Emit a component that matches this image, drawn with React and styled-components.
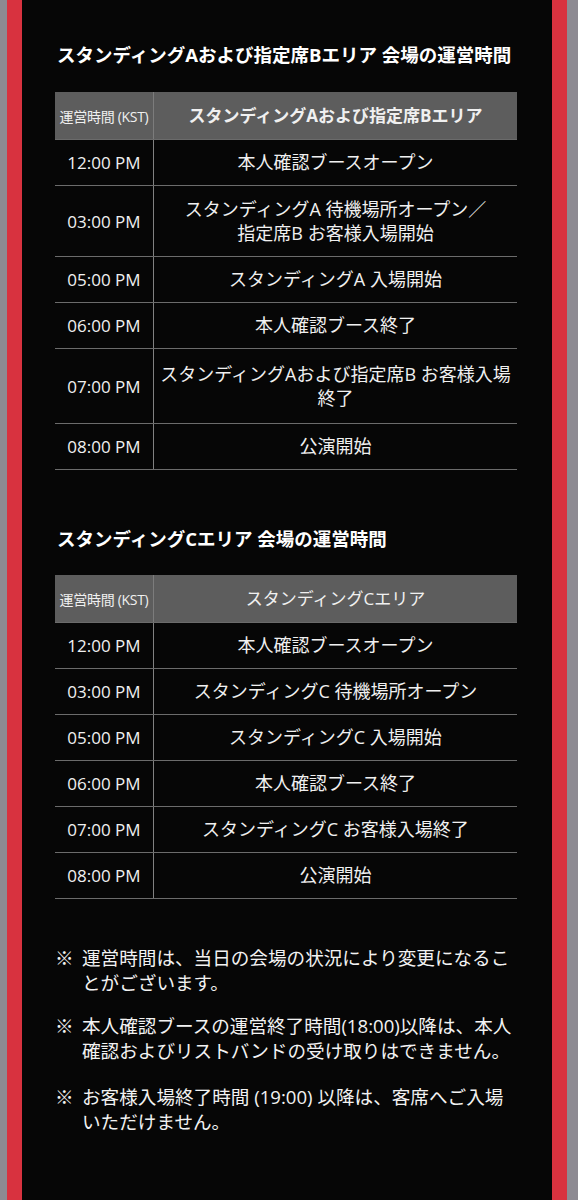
import React from "react";
import styled, { createGlobalStyle } from "styled-components";

const GlobalStyle = createGlobalStyle`
  html, body {
    margin: 0;
    padding: 0;
    background: #050505;
  }
  body {
    font-family: "Open Sans", "Noto Sans CJK JP", sans-serif;
    color: #f2f2f2;
  }
`;

const Frame = styled.div`
  display: flex;
  flex-direction: row;
  width: 578px;
  height: 1200px;
  background: #8d8a92;
`;

const Edge = styled.div`
  width: ${(p) => p.w}px;
  flex-shrink: 0;
  background: ${(p) => (p.red ? "#d8323f" : "#8d8a92")};
`;

const Main = styled.div`
  display: flex;
  flex-direction: column;
  flex: 1;
  background: #060606;
  padding: 42px 35px 0 33px;
`;

const Title = styled.h2`
  margin: ${(p) => p.mt || 0}px 0 0 2px;
  font-size: 18.5px;
  line-height: 26px;
  font-weight: 700;
  color: #ffffff;
  white-space: nowrap;
`;

const Table = styled.div`
  display: flex;
  flex-direction: column;
  margin-top: ${(p) => p.mt || 24}px;
`;

const Row = styled.div`
  display: grid;
  grid-template-columns: 99px 1fr;
  border-bottom: 1px solid #6b6b6b;
  background: ${(p) => (p.head ? "#5d5d5d" : "transparent")};
`;

const TimeCell = styled.div`
  display: flex;
  align-items: center;
  justify-content: center;
  border-right: 1px solid ${(p) => (p.head ? "#7c7c7c" : "#808080")};
  font-size: ${(p) => (p.head ? 14 : 17)}px;
  letter-spacing: ${(p) => (p.head ? "-0.3px" : "0")};
  color: #f0f0f0;
  white-space: nowrap;
`;

const TextCell = styled.div`
  display: flex;
  flex-direction: column;
  align-items: center;
  justify-content: center;
  text-align: center;
  padding: ${(p) => p.pad}px 0;
  font-size: ${(p) => (p.head ? 17 : 18)}px;
  line-height: ${(p) => (p.multi ? 24 : 23)}px;
  font-weight: ${(p) => (p.bold ? 700 : 400)};
  color: #f0f0f0;
  white-space: nowrap;
`;

const Notes = styled.ul`
  list-style: none;
  margin: 46px 0 0 0;
  padding: 0;
  display: flex;
  flex-direction: column;
`;

const Note = styled.li`
  display: flex;
  flex-direction: row;
  margin-top: ${(p) => p.mt}px;
  font-size: 18.6px;
  line-height: 25px;
  color: #f2f2f2;
  white-space: nowrap;
`;

const Mark = styled.span`
  width: 27px;
  flex-shrink: 0;
`;

const scheduleA = [
  ["12:00 PM", ["本人確認ブースオープン"]],
  ["03:00 PM", ["スタンディングA 待機場所オープン／", "指定席B お客様入場開始"]],
  ["05:00 PM", ["スタンディングA 入場開始"]],
  ["06:00 PM", ["本人確認ブース終了"]],
  ["07:00 PM", ["スタンディングAおよび指定席B お客様入場", "終了"], 13],
  ["08:00 PM", ["公演開始"]],
];

const scheduleC = [
  ["12:00 PM", ["本人確認ブースオープン"]],
  ["03:00 PM", ["スタンディングC 待機場所オープン"]],
  ["05:00 PM", ["スタンディングC 入場開始"]],
  ["06:00 PM", ["本人確認ブース終了"]],
  ["07:00 PM", ["スタンディングC お客様入場終了"]],
  ["08:00 PM", ["公演開始"]],
];

const notes = [
  [0, ["運営時間は、当日の会場の状況により変更になるこ", "とがございます。"]],
  [18, ["本人確認ブースの運営終了時間(18:00)以降は、本人", "確認およびリストバンドの受け取りはできません。"]],
  [21, ["お客様入場終了時間 (19:00) 以降は、客席へご入場", "いただけません。"]],
];

const ScheduleTable = ({ area, rows, bold, mt }) => (
  <Table mt={mt}>
    <Row head>
      <TimeCell head>運営時間 (KST)</TimeCell>
      <TextCell head bold={bold} pad={12}>
        {area}
      </TextCell>
    </Row>
    {rows.map(([time, lines, pad]) => (
      <Row key={time}>
        <TimeCell>{time}</TimeCell>
        <TextCell multi={lines.length > 1} pad={pad || 11}>
          {lines.map((line, i) => (
            <span key={i}>{line}</span>
          ))}
        </TextCell>
      </Row>
    ))}
  </Table>
);

export default function App() {
  return (
    <>
      <GlobalStyle />
      <Frame>
        <Edge w={7} />
        <Edge w={15} red />
        <Main>
          <Title>スタンディングAおよび指定席Bエリア 会場の運営時間</Title>
          <ScheduleTable
            area="スタンディングAおよび指定席Bエリア"
            rows={scheduleA}
            bold
          />
          <Title mt={56}>スタンディングCエリア 会場の運営時間</Title>
          <ScheduleTable area="スタンディングCエリア" rows={scheduleC} mt={23} />
          <Notes>
            {notes.map(([mt, lines], i) => (
              <Note key={i} mt={mt}>
                <Mark>※</Mark>
                <div>
                  {lines.map((line, j) => (
                    <div key={j}>{line}</div>
                  ))}
                </div>
              </Note>
            ))}
          </Notes>
        </Main>
        <Edge w={15} red />
        <Edge w={11} />
      </Frame>
    </>
  );
}
